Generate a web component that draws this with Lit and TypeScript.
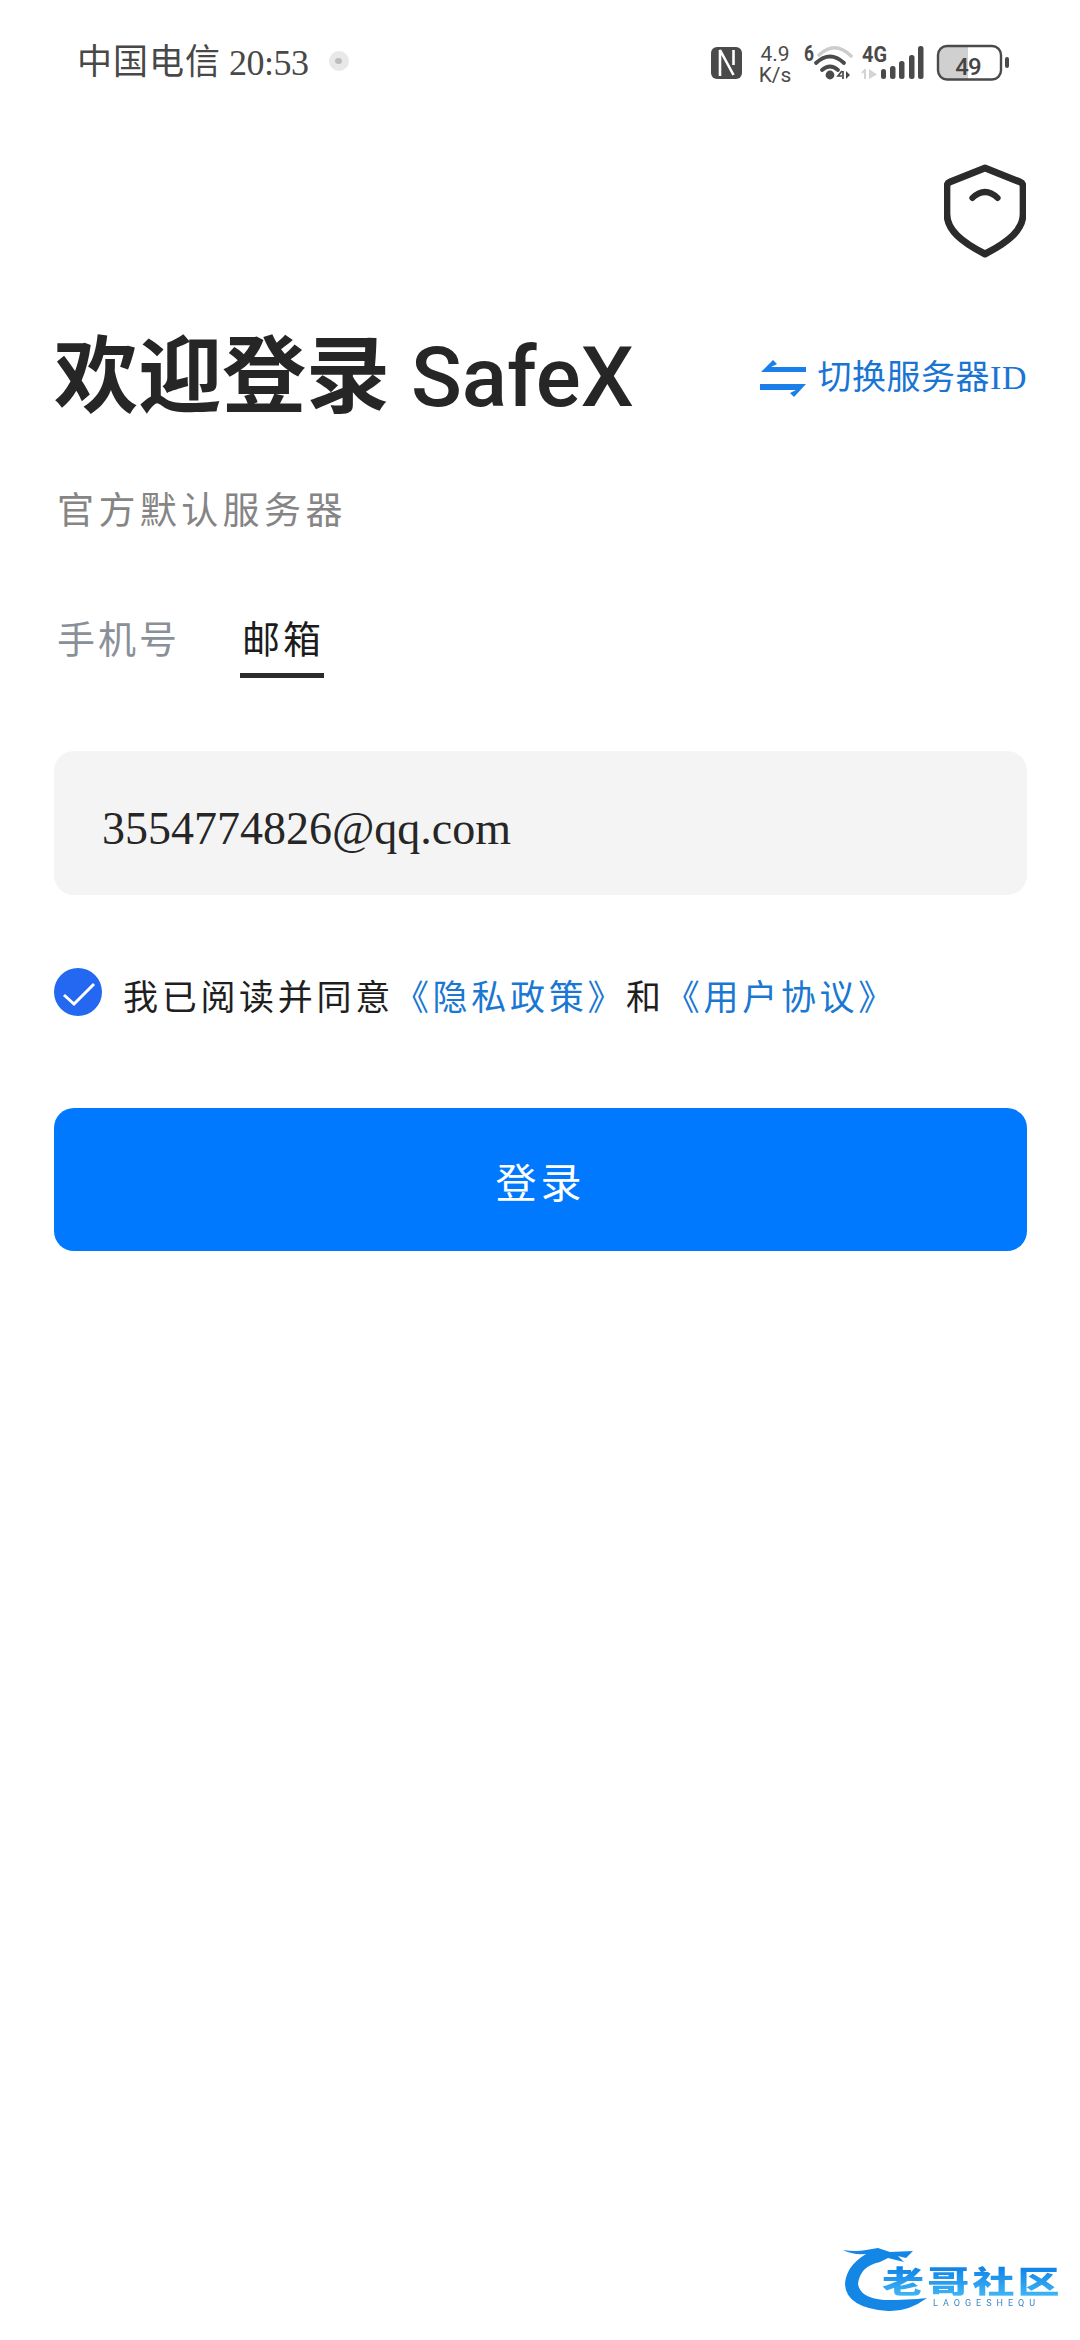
import { LitElement, html, css, svg } from 'lit';
import { customElement } from 'lit/decorators.js';

const statusIcons = svg`
  <rect x="711" y="44" width="31" height="32" rx="6" fill="#4a4a4a"/>
  <path d="M720 73 V47 L733.5 72 M733.5 47 V62" fill="none" stroke="#fff" stroke-width="2.6"/>
  <text x="775" y="58" class="speed" text-anchor="middle">4.9</text>
  <text x="775" y="79" class="speed" text-anchor="middle">K/s</text>
  <text x="804" y="58" class="net" textLength="10" lengthAdjust="spacingAndGlyphs">6</text>
  <path d="M819 52 Q835 37 851 53" fill="none" stroke="#ccc" stroke-width="3.5" stroke-linecap="round"/>
  <path d="M816 60 Q830 47 844 60" fill="none" stroke="#4a4a4a" stroke-width="3.8" stroke-linecap="round"/>
  <path d="M822 67 Q830 60 838 67" fill="none" stroke="#4a4a4a" stroke-width="3.8" stroke-linecap="round"/>
  <circle cx="830" cy="72" r="4.4" fill="#4a4a4a"/>
  <path d="M842 68 L838 73 H842 M843 68 V76" fill="none" stroke="#4a4a4a" stroke-width="1.7"/>
  <path d="M846 68 V76 L850 72 Z" fill="#4a4a4a"/>
  <text x="862" y="59" class="net" textLength="25" lengthAdjust="spacingAndGlyphs">4G</text>
  <path d="M865 67 L862 70 M865 66 V76" fill="none" stroke="#d4d4d4" stroke-width="2"/>
  <path d="M869 66 V76 L877 71.5 Z" fill="#d4d4d4"/>
  <rect x="881" y="66" width="5" height="10" rx="2.5" fill="#4a4a4a"/>
  <rect x="890" y="63" width="5.5" height="13" rx="2.5" fill="#4a4a4a"/>
  <rect x="899" y="58" width="5.5" height="18" rx="2.5" fill="#4a4a4a"/>
  <rect x="909" y="52" width="5.5" height="24" rx="2.5" fill="#4a4a4a"/>
  <rect x="918" y="43" width="5.5" height="33" rx="2.5" fill="#4a4a4a"/>
  <path d="M968 43 H947 Q938 43 938 52 V67 Q938 76 947 76 H968 Z" fill="#d0d0d0"/>
  <rect x="938" y="43" width="63" height="33.5" rx="9" fill="none" stroke="#4a4a4a" stroke-width="2.4"/>
  <rect x="1005" y="54" width="4" height="11" rx="2" fill="#4a4a4a"/>
  <text x="968" y="72" class="level" text-anchor="middle">49</text>
`;

@customElement('app-root')
export class AppRoot extends LitElement {
  static styles = css`
    :host {
      display: block;
      width: 1080px;
    }
    .page {
      position: relative;
      box-sizing: border-box;
      width: 1080px;
      height: 2340px;
      overflow: hidden;
      background: #fff;
      font-family: 'Liberation Serif', 'Noto Sans CJK SC', serif;
      color: #222;
    }
    .status {
      display: flex;
      align-items: center;
      justify-content: space-between;
      height: 126px;
      padding: 0 60px 0 77px;
      color: #484848;
    }
    .carrier {
      display: flex;
      align-items: center;
      gap: 20px;
      font-size: 35px;
      line-height: 40px;
      letter-spacing: 1px;
    }
    .carrier .time {
      margin-left: -12px;
      font-size: 36px;
      letter-spacing: -0.5px;
    }
    .dot {
      display: flex;
      align-items: center;
      justify-content: center;
      width: 20px;
      height: 20px;
      margin-top: -4px;
      border-radius: 50%;
      background: #e8e8e8;
    }
    .dot i {
      width: 7px;
      height: 6px;
      border-radius: 50%;
      background: #bdbdbd;
    }
    .status svg {
      display: block;
      width: 320px;
      height: 48px;
    }
    .speed {
      font: 400 21px Roboto, sans-serif;
      fill: #4a4a4a;
    }
    .net {
      font: 700 22px Roboto, sans-serif;
      fill: #4a4a4a;
    }
    .level {
      font: 500 24px Roboto, sans-serif;
      fill: #444;
      letter-spacing: -1px;
    }
    .tools {
      display: flex;
      justify-content: flex-end;
      margin-top: 38px;
      padding-right: 54px;
    }
    .tools svg {
      display: block;
      width: 82px;
      height: 94px;
    }
    .head {
      display: flex;
      align-items: center;
      justify-content: space-between;
      height: 98px;
      margin-top: 71px;
      padding: 0 53px 0 54px;
    }
    h1 {
      margin: 0;
      font: 700 84px/98px Roboto, 'Noto Sans CJK SC', sans-serif;
      color: #262626;
      white-space: nowrap;
    }
    h1 span {
      font-weight: 500;
    }
    .switch {
      display: flex;
      align-items: center;
      gap: 12px;
      font-size: 34px;
      line-height: 40px;
      letter-spacing: 0.5px;
      color: #1a74d4;
    }
    .switch svg {
      display: block;
      width: 46px;
      height: 37px;
    }
    .sub {
      margin-top: 60px;
      padding: 0 57px;
      font-size: 37px;
      line-height: 50px;
      letter-spacing: 4.4px;
      color: #858585;
    }
    .tabs {
      display: flex;
      gap: 60px;
      margin-top: 78px;
      padding: 0 57px;
    }
    .tab {
      font-size: 38px;
      line-height: 50px;
      letter-spacing: 3px;
      color: #8a9097;
      padding-bottom: 13px;
    }
    .tab.active {
      padding: 0 0 8px 2px;
      color: #1c1c1c;
      border-bottom: 5px solid #2b2b2b;
    }
    .field {
      display: flex;
      align-items: center;
      box-sizing: border-box;
      height: 144px;
      margin: 73px 53px 0 54px;
      padding: 11px 48px 0;
      border-radius: 20px;
      background: #f4f4f4;
      font-size: 46px;
      color: #262626;
    }
    .agree {
      display: flex;
      align-items: flex-start;
      gap: 21px;
      height: 48px;
      margin-top: 73px;
      padding: 0 54px;
      font-size: 35px;
      line-height: 48px;
      letter-spacing: 3.7px;
      color: #1f1f1f;
      white-space: nowrap;
    }
    .agree svg {
      display: block;
      flex: none;
      width: 48px;
      height: 48px;
    }
    .agree span {
      margin-top: 7px;
    }
    .agree a {
      color: #1a78d2;
      text-decoration: none;
    }
    .login {
      display: flex;
      align-items: center;
      justify-content: center;
      height: 143px;
      margin: 92px 53px 0 54px;
      border-radius: 20px;
      background: #0079fe;
      color: #fff;
      font-size: 41px;
      letter-spacing: 4px;
    }
    .mark {
      position: absolute;
      left: 838px;
      top: 2240px;
      width: 236px;
      height: 86px;
      filter: blur(0.6px);
    }
    .mark svg {
      position: absolute;
      left: 0;
      top: 0;
      width: 120px;
      height: 86px;
    }
    .mark b {
      position: absolute;
      left: 44px;
      top: 24px;
      font: 900 42px/44px 'Noto Sans CJK SC', sans-serif;
      letter-spacing: 3.2px;
      white-space: nowrap;
      transform: scaleY(0.72);
      transform-origin: left top;
      background: linear-gradient(#0a7ee6, #3fb4f5);
      -webkit-background-clip: text;
      background-clip: text;
      color: transparent;
    }
    .mark small {
      position: absolute;
      left: 95px;
      top: 58px;
      font: 400 9px/11px Roboto, sans-serif;
      letter-spacing: 5px;
      color: #3c86c4;
    }
  `;

  render() {
    return html`
      <div class="page">
        <div class="status">
          <div class="carrier">
            <span>中国电信</span><span class="time">20:53</span>
            <span class="dot"><i></i></span>
          </div>
          <svg viewBox="700 36 320 48">${statusIcons}</svg>
        </div>

        <div class="tools">
          <svg viewBox="0 0 84 94" preserveAspectRatio="none" fill="none" stroke="#2b2b2b" stroke-linejoin="round" stroke-linecap="round">
            <path d="M42 4 L78 18 Q81 19 81 23 V50 C81 66 66 78 42 90 C18 78 3 66 3 50 V23 Q3 19 6 18 Z" stroke-width="7"/>
            <path d="M29 34 Q42 22 55 34" stroke-width="6"/>
          </svg>
        </div>

        <div class="head">
          <h1>欢迎登录 <span>SafeX</span></h1>
          <div class="switch">
            <svg viewBox="0 0 46 37" fill="#1a7fe8">
              <path d="M1 12 L13 0 L17 4 L11 7 H46 V12 Z"/>
              <path d="M0 24 H46 L34 37 L30 33 L36 30 H0 Z"/>
            </svg>
            <span>切换服务器ID</span>
          </div>
        </div>

        <div class="sub">官方默认服务器</div>

        <div class="tabs">
          <div class="tab">手机号</div>
          <div class="tab active">邮箱</div>
        </div>

        <div class="field">3554774826@qq.com</div>

        <div class="agree">
          <svg viewBox="0 0 48 48">
            <circle cx="24" cy="24" r="24" fill="#2468f2"/>
            <path d="M10 27 L20 36 L40 16" fill="none" stroke="#fff" stroke-width="3"/>
          </svg>
          <span>我已阅读并同意<a>《隐私政策》</a>和<a>《用户协议》</a></span>
        </div>

        <div class="login">登录</div>

        <div class="mark">
          <svg viewBox="0 0 120 86" fill="#1487e6">
            <path d="M5 10 Q18 12 28 10 L40 8 L52 12 L75 11 L68 18 L60 16 L66 22 L50 18 L42 22 Q22 26 20 44 Q22 58 46 60 Q70 60 89 58 Q70 72 50 71 Q8 68 7 44 Q8 26 28 14 Q14 15 5 10 Z"/>
          </svg>
          <b>老哥社区</b>
          <small>LAOGESHEQU</small>
        </div>
      </div>
    `;
  }
}
